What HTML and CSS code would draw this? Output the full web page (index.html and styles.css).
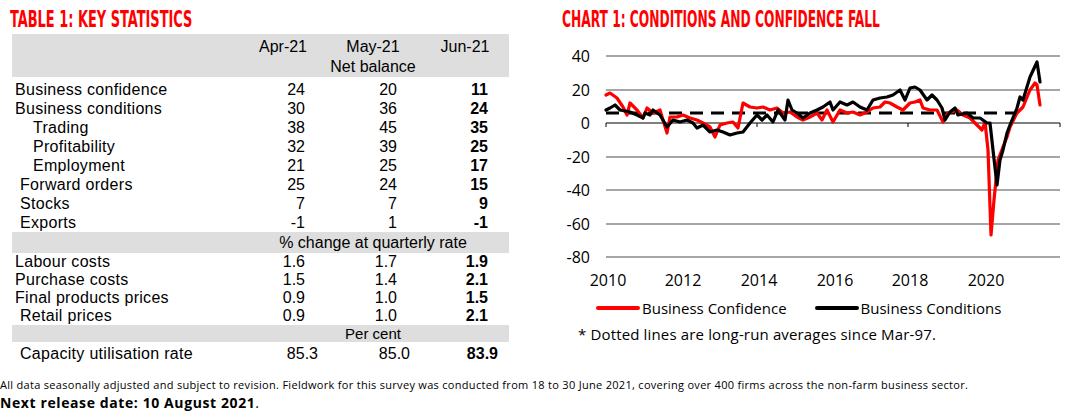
FILE: index.html
```html
<!DOCTYPE html>
<html>
<head>
<meta charset="utf-8">
<link rel="stylesheet" href="styles.css">
</head>
<body>
<div class="columns">
  <section class="table-panel">
    <h2 class="title"><span>TABLE 1: KEY STATISTICS</span></h2>
    <div class="stats">
      <div class="band head">
        <div class="row hrow"><span></span><span class="c">Apr-21</span><span class="c">May-21</span><span class="c">Jun-21</span></div>
        <div class="row hrow"><span></span><span class="sub">Net balance</span></div>
      </div>
      <div class="group g1">
        <div class="row"><span class="l0">Business confidence</span><span class="n2">24</span><span class="n3">20</span><span class="n4 b">11</span></div>
        <div class="row"><span class="l0">Business conditions</span><span class="n2">30</span><span class="n3">36</span><span class="n4 b">24</span></div>
        <div class="row"><span class="l2">Trading</span><span class="n2">38</span><span class="n3">45</span><span class="n4 b">35</span></div>
        <div class="row"><span class="l2">Profitability</span><span class="n2">32</span><span class="n3">39</span><span class="n4 b">25</span></div>
        <div class="row"><span class="l2">Employment</span><span class="n2">21</span><span class="n3">25</span><span class="n4 b">17</span></div>
        <div class="row"><span class="l1">Forward orders</span><span class="n2">25</span><span class="n3">24</span><span class="n4 b">15</span></div>
        <div class="row"><span class="l1">Stocks</span><span class="n2">7</span><span class="n3">7</span><span class="n4 b">9</span></div>
        <div class="row"><span class="l1">Exports</span><span class="n2">-1</span><span class="n3">1</span><span class="n4 b">-1</span></div>
      </div>
      <div class="band row sep1"><span></span><span class="sub">% change at quarterly rate</span></div>
      <div class="group g2">
        <div class="row"><span class="l0">Labour costs</span><span class="n2">1.6</span><span class="n3">1.7</span><span class="n4 b">1.9</span></div>
        <div class="row"><span class="l0">Purchase costs</span><span class="n2">1.5</span><span class="n3">1.4</span><span class="n4 b">2.1</span></div>
        <div class="row"><span class="l0">Final products prices</span><span class="n2">0.9</span><span class="n3">1.0</span><span class="n4 b">1.5</span></div>
        <div class="row"><span class="l1">Retail prices</span><span class="n2">0.9</span><span class="n3">1.0</span><span class="n4 b">2.1</span></div>
      </div>
      <div class="band row sep2"><span></span><span class="sub">Per cent</span></div>
      <div class="row cap"><span class="l1">Capacity utilisation rate</span><span class="n2">85.3</span><span class="n3">85.0</span><span class="n4 b">83.9</span></div>
    </div>
  </section>
  <section class="chart-panel">
    <h2 class="title"><span>CHART 1: CONDITIONS AND CONFIDENCE FALL</span></h2>
    <svg class="chart" width="539" height="262" viewBox="530 34 539 262">
      <g class="grid">
        <line x1="606" y1="56" x2="1060" y2="56"/>
        <line x1="606" y1="90" x2="1060" y2="90"/>
        <line x1="606" y1="157" x2="1060" y2="157"/>
        <line x1="606" y1="190" x2="1060" y2="190"/>
        <line x1="606" y1="224" x2="1060" y2="224"/>
        <line x1="606" y1="257" x2="1060" y2="257"/>
      </g>
      <g class="axis">
        <line x1="606" y1="123" x2="1060" y2="123"/>
        <line x1="606" y1="123" x2="606" y2="127"/>
        <line x1="757" y1="123" x2="757" y2="127"/>
        <line x1="908" y1="123" x2="908" y2="127"/>
        <line x1="1060" y1="123" x2="1060" y2="127"/>
      </g>
      <g class="ylab">
        <text x="590" y="61.5">40</text>
        <text x="590" y="95.5">20</text>
        <text x="590" y="128.5">0</text>
        <text x="590" y="162.5">-20</text>
        <text x="590" y="195.5">-40</text>
        <text x="590" y="229.5">-60</text>
        <text x="590" y="262.5">-80</text>
      </g>
      <g class="xlab">
        <text x="608" y="286">2010</text>
        <text x="683" y="286">2012</text>
        <text x="759" y="286">2014</text>
        <text x="835" y="286">2016</text>
        <text x="910" y="286">2018</text>
        <text x="986" y="286">2020</text>
      </g>
      <line class="avg" x1="606" y1="113" x2="1021" y2="113"/>
      <polyline class="conf" points="606,95 610,93 617,98 623,107 627,115 630,103 637,110 643,118 647,108 653,113 660,110 667,133 670,117 677,117 683,115 690,118 697,120 703,123 710,127 715,137 720,125 727,123 733,122 738,128 743,103 750,107 757,108 763,107 770,110 777,108 783,113 790,112 797,117 803,120 810,117 817,113 822,120 827,110 833,122 840,110 847,113 853,112 860,115 867,112 873,108 880,107 885,102 890,103 897,107 903,110 910,103 915,102 920,100 923,108 930,110 937,110 943,122 948,113 957,110 963,115 970,118 977,125 982,130 985,122 988,150 991,235 994,200 998,160 1003,147 1007,137 1010,127 1017,113 1023,107 1030,90 1035,83 1037,85 1040,105"/>
      <polyline class="cond" points="606,110 610,108 615,105 620,110 625,111 630,112 637,115 643,118 645,113 650,115 653,110 660,115 667,127 673,120 680,122 687,120 693,123 697,128 703,125 710,132 717,130 723,132 730,135 737,133 743,132 750,123 757,115 762,120 767,115 773,122 778,110 785,120 788,100 792,110 797,113 803,118 810,113 817,110 823,107 830,102 833,110 840,102 847,105 853,102 860,107 867,110 873,100 880,98 887,97 893,95 900,90 905,100 910,88 915,87 920,90 927,100 932,95 937,100 942,108 945,120 950,112 955,108 958,115 967,113 973,118 980,118 987,123 990,123 993,150 997,185 1000,160 1003,150 1007,133 1010,125 1017,108 1020,97 1023,100 1030,77 1037,62 1040,82"/>
    </svg>
    <div class="legend">
      <span class="key"><svg width="44" height="6" viewBox="0 0 44 6"><line x1="2" y1="3" x2="42" y2="3" class="k-red"/></svg>Business Confidence</span>
      <span class="key"><svg width="44" height="6" viewBox="0 0 44 6"><line x1="2" y1="3" x2="42" y2="3" class="k-black"/></svg>Business Conditions</span>
    </div>
    <p class="note">* Dotted lines are long-run averages since Mar-97.</p>
  </section>
</div>
<footer class="foot">
  <p class="small">All data seasonally adjusted and subject to revision. Fieldwork for this survey was conducted from 18 to 30 June 2021, covering over 400 firms across the non-farm business sector.</p>
  <p class="release"><strong>Next release date: 10 August 2021</strong>.</p>
</footer>
</body>
</html>
```

FILE: styles.css
```css
html, body {
  margin: 0;
  padding: 0;
  background: #fff;
}
body {
  width: 1069px;
  height: 420px;
  overflow: hidden;
  font-family: "Open Sans", "Noto Sans", sans-serif;
  color: #000;
}
.columns {
  display: flex;
  height: 365px;
}
.table-panel {
  width: 530px;
  flex: none;
}
.chart-panel {
  width: 539px;
  flex: none;
}
.title {
  margin: 0;
  height: 34px;
  box-sizing: border-box;
  padding-top: 4px;
  line-height: 30px;
  font-family: "Liberation Sans Narrow", "DejaVu Sans Condensed", sans-serif;
  font-weight: 700;
  font-size: 22.5px;
  color: #ff0000;
  white-space: nowrap;
}
.title span {
  display: inline-block;
  transform-origin: 0 50%;
}
.table-panel .title { padding-left: 10px; }
.table-panel .title span { transform: scaleX(0.64); }
.chart-panel .title { padding-left: 32px; }
.chart-panel .title span { transform: scaleX(0.605); }

.stats {
  margin-left: 12px;
  width: 497px;
  font-family: "Liberation Sans", Arial, sans-serif;
  font-size: 16px;
}
.band {
  background: #dedede;
}
.row {
  display: grid;
  grid-template-columns: 233px 76px 104px 80px;
  height: 19px;
  line-height: 19px;
  white-space: nowrap;
}
.head {
  padding-top: 3px;
}
.hrow {
  height: 20px;
  line-height: 20px;
}
.c { text-align: center; }
.sub {
  grid-column: 2 / 5;
  text-align: center;
  padding-right: 4px;
}
.g1 { padding-top: 2.5px; }
.sep1 { height: 21px; line-height: 21px; }
.g2 .row { height: 18px; line-height: 18px; }
.sep2 { height: 17px; line-height: 17px; font-size: 15px; }
.cap { height: 23px; line-height: 23px; }

.l0, .l1, .l2 { letter-spacing: 0.3px; }
.l0 { padding-left: 3px; }
.l1 { padding-left: 8px; }
.l2 { padding-left: 21px; }
.n2, .n3, .n4 { text-align: right; }
.n2 { padding-right: 16px; }
.n3 { padding-right: 28px; }
.n4 { padding-right: 17px; }
.b { font-weight: 700; }
.cap .n2 { padding-right: 3px; }
.cap .n3 { padding-right: 15px; }
.cap .n4 { padding-right: 7px; }

.chart {
  display: block;
  font-family: "Open Sans", "Noto Sans", sans-serif;
  font-size: 16px;
}
.grid line {
  stroke: #a6a6a6;
  stroke-width: 2;
}
.axis line {
  stroke: #000;
  stroke-width: 1;
}
.ylab text { text-anchor: end; }
.xlab text { text-anchor: middle; }
.avg {
  stroke: #000;
  stroke-width: 3;
  stroke-dasharray: 13 8;
}
.conf, .cond {
  fill: none;
  stroke-width: 3.2;
  stroke-linejoin: round;
  stroke-linecap: round;
}
.conf { stroke: #ff0000; }
.cond { stroke: #000; }

.legend {
  display: flex;
  height: 24px;
  align-items: center;
  padding-left: 66px;
  gap: 28px;
  font-size: 15px;
}
.key {
  display: flex;
  align-items: center;
  gap: 2px;
}
.key svg { display: block; }
.k-red, .k-black {
  stroke-width: 4;
  stroke-linecap: round;
}
.k-red { stroke: #ff0000; }
.k-black { stroke: #000; }
.note {
  margin: 2px 0 0 48px;
  height: 24px;
  line-height: 24px;
  font-size: 15px;
  letter-spacing: 0.15px;
}

.foot p {
  margin: 0;
  white-space: nowrap;
}
.foot .small {
  margin-top: 11px;
  font-size: 11px;
  letter-spacing: 0.3px;
  line-height: 18px;
}
.foot .release {
  font-size: 14px;
  letter-spacing: 0.6px;
  line-height: 18px;
}
```
